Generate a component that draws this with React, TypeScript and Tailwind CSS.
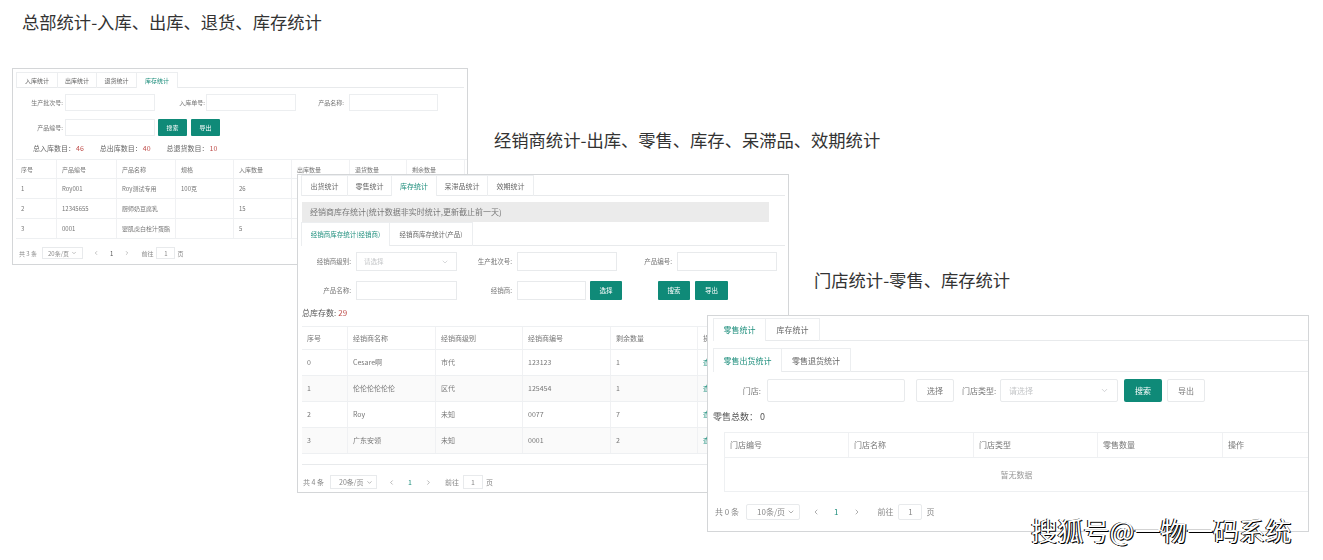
import React from "react";
import { ChevronDown, ChevronLeft, ChevronRight } from "lucide-react";

type TabsProps = {
  items: { label: string; width: number }[];
  active: number;
  size: string;
  height: string;
};

const Tabs = ({ items, active, size, height }: TabsProps) => (
  <div className="flex border-b border-[#e8eaec]">
    <div className={`flex border-x border-t border-[#eceef0] -mb-px ${height}`}>
      {items.map((t, i) => (
        <div
          key={t.label}
          style={{ width: t.width }}
          className={`flex items-center justify-center whitespace-nowrap border-r border-[#eceef0] last:border-r-0 ${size} ${
            i === active ? "text-[#1f8f7d] bg-white" : "text-[#666]"
          }`}
        >
          {t.label}
        </div>
      ))}
    </div>
  </div>
);

type TableProps = {
  columns: { label: string; width: number }[];
  rows: string[][];
  headHeight: string;
  rowHeights: string[];
  size: string;
  pad: string;
  striped?: boolean;
  lastIsLink?: boolean;
};

const Table = ({ columns, rows, headHeight, rowHeights, size, pad, striped, lastIsLink }: TableProps) => (
  <div className={`${size} text-[#777]`}>
    <div className={`flex border-y border-[#eef0f2] ${headHeight}`}>
      {columns.map((c) => (
        <div key={c.label} style={{ width: c.width }} className={`flex shrink-0 items-center whitespace-nowrap border-r border-[#f0f1f3] ${pad}`}>
          {c.label}
        </div>
      ))}
    </div>
    {rows.map((r, i) => (
      <div
        key={r[0]}
        className={`flex border-b border-[#eef0f2] ${rowHeights[i]} ${striped && i % 2 === 1 ? "bg-[#fafafa]" : ""}`}
      >
        {r.map((v, j) => (
          <div
            key={j}
            style={{ width: columns[j].width }}
            className={`flex shrink-0 items-center whitespace-nowrap border-r border-[#f0f1f3] ${pad} ${
              lastIsLink && j === r.length - 1 ? "text-[#1f8f7d]" : ""
            }`}
          >
            {v}
          </div>
        ))}
      </div>
    ))}
  </div>
);

const Panel1 = () => (
  <div className="absolute left-[12px] top-[68px] h-[197px] w-[456px] overflow-hidden border border-[#d4d6d8] bg-white blur-[0.4px]">
    <div className="px-[3px] pt-[3px]">
      <Tabs
        size="text-[6px]"
        height="h-[16px]"
        active={3}
        items={[
          { label: "入库统计", width: 41 },
          { label: "出库统计", width: 39 },
          { label: "退货统计", width: 40 },
          { label: "库存统计", width: 40 },
        ]}
      />
    </div>
    <div className="text-[6px] text-[#777]">
      <div className="mt-[6px] flex items-center">
        <span className="w-[50px] whitespace-nowrap text-right">生产批次号:</span>
        <div className="ml-[2px] h-[17px] w-[90px] border border-[#eceef0]" />
        <span className="ml-[20px] w-[30px] whitespace-nowrap text-right">入库单号:</span>
        <div className="ml-[1px] h-[17px] w-[90px] border border-[#eceef0]" />
        <span className="ml-[22px] w-[26px] whitespace-nowrap text-right">产品名称:</span>
        <div className="ml-[5px] h-[17px] w-[89px] border border-[#eceef0]" />
      </div>
      <div className="mt-[8px] flex items-center">
        <span className="w-[50px] whitespace-nowrap text-right">产品编号:</span>
        <div className="ml-[2px] h-[17px] w-[90px] border border-[#eceef0]" />
        <div className="ml-[3px] flex h-[17px] w-[29px] items-center justify-center rounded-[1px] bg-[#0f8a78] text-white">搜索</div>
        <div className="ml-[4px] flex h-[17px] w-[29px] items-center justify-center rounded-[1px] bg-[#0f8a78] text-white">导出</div>
      </div>
      <div className="ml-[20px] mt-[7px] flex h-[10px] items-center whitespace-nowrap text-[7px] text-[#666]">
        <span>总入库数目：</span>
        <span className="ml-[1px] text-[#c0504d]">46</span>
        <span className="ml-[16px]">总出库数目：</span>
        <span className="ml-[1px] text-[#c0504d]">40</span>
        <span className="ml-[16px]">总退货数目：</span>
        <span className="ml-[1px] text-[#c0504d]">10</span>
      </div>
    </div>
    <div className="ml-[3px] mt-[6px]">
      <Table
        size="text-[6px]"
        pad="pl-[5px]"
        headHeight="h-[20px]"
        rowHeights={["h-[20px]", "h-[20px]", "h-[20px]"]}
        columns={[
          { label: "序号", width: 41 },
          { label: "产品编号", width: 60 },
          { label: "产品名称", width: 59 },
          { label: "规格", width: 58 },
          { label: "入库数量", width: 58 },
          { label: "出库数量", width: 58 },
          { label: "退货数量", width: 57 },
          { label: "剩余数量", width: 58 },
        ]}
        rows={[
          ["1", "Roy001", "Roy测试专用", "100克", "26", "", "", ""],
          ["2", "12345655", "厨师奶豆腐乳", "", "15", "", "", ""],
          ["3", "0001", "婴肌虎白栓汁蛋脂", "", "5", "", "", ""],
        ]}
      />
    </div>
    <div className="ml-[6px] mt-[8px] flex items-center whitespace-nowrap text-[6px] text-[#888]">
      <span>共 3 条</span>
      <div className="ml-[5px] flex h-[12px] w-[41px] items-center justify-between border border-[#e8eaec] px-[5px]">
        <span>20条/页</span>
        <ChevronDown className="size-[6px]" />
      </div>
      <ChevronLeft className="ml-[10px] size-[6px]" />
      <span className="ml-[11px] text-[#555]">1</span>
      <ChevronRight className="ml-[11px] size-[6px]" />
      <span className="ml-[11px]">前往</span>
      <div className="ml-[3px] flex h-[12px] w-[19px] items-center justify-center border border-[#e8eaec]">1</div>
      <span className="ml-[2px]">页</span>
    </div>
  </div>
);

const Panel2 = () => (
  <div className="absolute left-[297px] top-[174px] h-[319px] w-[492px] overflow-hidden border border-[#d4d6d8] bg-white blur-[0.25px]">
    <div className="px-[3px]">
      <Tabs
        size="text-[7px]"
        height="h-[21px]"
        active={2}
        items={[
          { label: "出货统计", width: 46 },
          { label: "零售统计", width: 44 },
          { label: "库存统计", width: 45 },
          { label: "呆滞品统计", width: 51 },
          { label: "效期统计", width: 45 },
        ]}
      />
    </div>
    <div className="ml-[4px] mt-[6px] flex h-[20px] w-[467px] items-center whitespace-nowrap bg-[#ebebeb] pl-[8px] text-[8px] text-[#777]">
      经销商库存统计(统计数据非实时统计,更新截止前一天)
    </div>
    <div className="px-[3px]">
      <Tabs
        size="text-[6.5px]"
        height="h-[24px]"
        active={0}
        items={[
          { label: "经销商库存统计(经销商)", width: 88 },
          { label: "经销商库存统计(产品)", width: 82 },
        ]}
      />
    </div>
    <div className="text-[6.5px] text-[#777]">
      <div className="mt-[6px] flex items-center">
        <span className="w-[53px] whitespace-nowrap text-right">经销商级别:</span>
        <div className="ml-[5px] flex h-[19px] w-[101px] items-center justify-between border border-[#e8eaec] px-[7px] text-[#c4c6c8]">
          <span>请选择</span>
          <ChevronDown className="size-[8px]" />
        </div>
        <span className="ml-[9px] w-[46px] whitespace-nowrap text-right">生产批次号:</span>
        <div className="ml-[5px] h-[19px] w-[100px] border border-[#e8eaec]" />
        <span className="ml-[25px] w-[30px] whitespace-nowrap text-right">产品编号:</span>
        <div className="ml-[5px] h-[19px] w-[100px] border border-[#e8eaec]" />
      </div>
      <div className="mt-[10px] flex items-center">
        <span className="w-[53px] whitespace-nowrap text-right">产品名称:</span>
        <div className="ml-[5px] h-[19px] w-[101px] border border-[#e8eaec]" />
        <span className="ml-[9px] w-[46px] whitespace-nowrap text-right">经销商:</span>
        <div className="ml-[5px] h-[19px] w-[69px] border border-[#e8eaec]" />
        <div className="ml-[4px] flex h-[19px] w-[32px] items-center justify-center rounded-[1px] bg-[#0f8a78] text-white">选择</div>
        <div className="ml-[36px] flex h-[19px] w-[32px] items-center justify-center rounded-[1px] bg-[#0f8a78] text-white">搜索</div>
        <div className="ml-[5px] flex h-[19px] w-[33px] items-center justify-center rounded-[1px] bg-[#0f8a78] text-white">导出</div>
      </div>
    </div>
    <div className="ml-[4px] mt-[7px] flex h-[12px] items-center whitespace-nowrap text-[8px] text-[#555]">
      总库存数:<span className="ml-[2px] text-[#c0504d]">29</span>
    </div>
    <div className="ml-[4px] mt-[7px]">
      <Table
        size="text-[7px]"
        pad="pl-[5px]"
        striped
        lastIsLink
        headHeight="h-[24px]"
        rowHeights={["h-[26px]", "h-[26px]", "h-[26px]", "h-[26px]"]}
        columns={[
          { label: "序号", width: 46 },
          { label: "经销商名称", width: 88 },
          { label: "经销商级别", width: 87 },
          { label: "经销商编号", width: 88 },
          { label: "剩余数量", width: 87 },
          { label: "操作", width: 91 },
        ]}
        rows={[
          ["0", "Cesare啊", "市代", "123123", "1", "查看"],
          ["1", "伦伦伦伦伦伦", "区代", "125454", "1", "查看"],
          ["2", "Roy", "未知", "0077", "7", "查看"],
          ["3", "广东安领", "未知", "0001", "2", "查看"],
        ]}
      />
      <div className="h-[11px] border-b border-[#e8eaec]" />
    </div>
    <div className="ml-[5px] mt-[10px] flex items-center whitespace-nowrap text-[7px] text-[#888]">
      <span>共 4 条</span>
      <div className="ml-[6px] flex h-[14px] w-[47px] items-center justify-between border border-[#e8eaec] pl-[8px] pr-[3px]">
        <span>20条/页</span>
        <ChevronDown className="size-[7px]" />
      </div>
      <ChevronLeft className="ml-[11px] size-[7px]" />
      <span className="ml-[13px] text-[#1f8f7d]">1</span>
      <ChevronRight className="ml-[13px] size-[7px]" />
      <span className="ml-[13px]">前往</span>
      <div className="ml-[4px] flex h-[14px] w-[20px] items-center justify-center border border-[#e8eaec]">1</div>
      <span className="ml-[3px]">页</span>
    </div>
  </div>
);

const Panel3 = () => (
  <div className="absolute left-[707px] top-[315px] h-[217px] w-[602px] overflow-hidden border border-[#d4d6d8] bg-white blur-[0.25px]">
    <div className="pl-[5px] pt-[2px]">
      <Tabs
        size="text-[8px]"
        height="h-[23px]"
        active={0}
        items={[
          { label: "零售统计", width: 52 },
          { label: "库存统计", width: 53 },
        ]}
      />
    </div>
    <div className="pl-[5px] pt-[7px]">
      <Tabs
        size="text-[8px]"
        height="h-[24px]"
        active={0}
        items={[
          { label: "零售出货统计", width: 68 },
          { label: "零售退货统计", width: 68 },
        ]}
      />
    </div>
    <div className="mt-[7px] flex items-center whitespace-nowrap text-[8px] text-[#777]">
      <span className="w-[53px] text-right">门店:</span>
      <div className="ml-[6px] h-[23px] w-[138px] rounded-[2px] border border-[#e8eaec]" />
      <div className="ml-[11px] flex h-[23px] w-[38px] items-center justify-center rounded-[2px] border border-[#e8eaec]">选择</div>
      <span className="ml-[8px] w-[33px]">门店类型:</span>
      <div className="ml-[5px] flex h-[23px] w-[118px] items-center justify-between rounded-[2px] border border-[#e8eaec] px-[8px] text-[#c4c6c8]">
        <span>请选择</span>
        <ChevronDown className="size-[9px]" />
      </div>
      <div className="ml-[6px] flex h-[23px] w-[38px] items-center justify-center rounded-[2px] bg-[#0f8a78] text-white">搜索</div>
      <div className="ml-[5px] flex h-[23px] w-[38px] items-center justify-center rounded-[2px] border border-[#e8eaec]">导出</div>
    </div>
    <div className="ml-[5px] mt-[8px] flex h-[14px] items-center whitespace-nowrap text-[9px] text-[#555]">零售总数： 0</div>
    <div className="ml-[16px] mt-[8px] border-l border-[#eef0f2]">
      <Table
        size="text-[8px]"
        pad="pl-[5px]"
        headHeight="h-[26px]"
        rowHeights={[]}
        columns={[
          { label: "门店编号", width: 124 },
          { label: "门店名称", width: 125 },
          { label: "门店类型", width: 124 },
          { label: "零售数量", width: 125 },
          { label: "操作", width: 87 },
        ]}
        rows={[]}
      />
      <div className="flex h-[34px] items-center justify-center border-b border-[#eef0f2] text-[8px] text-[#999]">暂无数据</div>
    </div>
    <div className="ml-[7px] mt-[12px] flex items-center whitespace-nowrap text-[8px] text-[#888]">
      <span>共 0 条</span>
      <div className="ml-[7px] flex h-[16px] w-[54px] items-center justify-between rounded-[2px] border border-[#e8eaec] pl-[10px] pr-[4px]">
        <span>10条/页</span>
        <ChevronDown className="size-[8px]" />
      </div>
      <ChevronLeft className="ml-[12px] size-[8px]" />
      <span className="ml-[14px] text-[#1f8f7d]">1</span>
      <ChevronRight className="ml-[15px] size-[8px]" />
      <span className="ml-[16px]">前往</span>
      <div className="ml-[5px] flex h-[16px] w-[24px] items-center justify-center rounded-[2px] border border-[#e8eaec]">1</div>
      <span className="ml-[4px]">页</span>
    </div>
  </div>
);

export default function App() {
  return (
    <div className="relative h-[560px] w-[1323px] overflow-hidden bg-white font-['Noto_Sans_CJK_SC','Noto_Sans',sans-serif]">
      <h2 className="absolute left-[22px] top-[10px] whitespace-nowrap text-[17.3px] font-normal leading-[24px] text-[#333]">
        总部统计-入库、出库、退货、库存统计
      </h2>
      <Panel1 />
      <h2 className="absolute left-[494px] top-[128px] whitespace-nowrap text-[17.3px] font-normal leading-[24px] text-[#333]">
        经销商统计-出库、零售、库存、呆滞品、效期统计
      </h2>
      <Panel2 />
      <h2 className="absolute left-[814px] top-[268px] whitespace-nowrap text-[17.3px] font-normal leading-[24px] text-[#333]">
        门店统计-零售、库存统计
      </h2>
      <Panel3 />
      <div className="absolute left-[1031px] top-[512px] whitespace-nowrap text-[26.2px] leading-[36px] text-white [text-shadow:1px_1px_0_#000,-1px_0_0_#000]">
        搜狐号@一物一码系统
      </div>
    </div>
  );
}
